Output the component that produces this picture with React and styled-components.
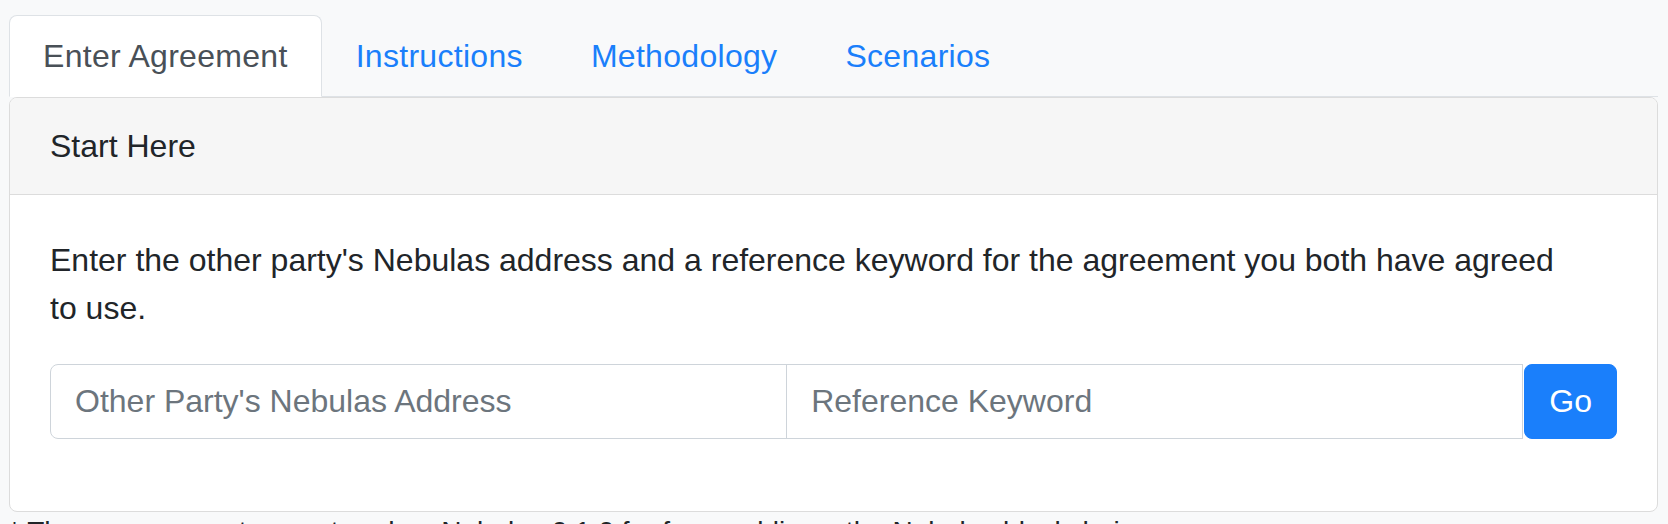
import React from 'react'
import styled, { createGlobalStyle } from 'styled-components'

const GlobalStyle = createGlobalStyle`
  body {
    margin: 0;
    background: #f8f9fa;
    font-family: "Liberation Sans", Arial, Helvetica, sans-serif;
    color: #212529;
  }
`

const tabs = ['Enter Agreement', 'Instructions', 'Methodology', 'Scenarios']

export default function App() {
  return (
    <>
      <GlobalStyle />
      <Page>
        <TabBar>
          {tabs.map((t, i) => (
            <Tab key={t} $active={i === 0}>{t}</Tab>
          ))}
        </TabBar>
        <Card>
          <CardHeader>Start Here</CardHeader>
          <CardBody>
            <Lead>
              Enter the other party's Nebulas address and a reference keyword for the agreement you both have agreed to use.
            </Lead>
            <InputGroup>
              <Field $first placeholder="Other Party's Nebulas Address" />
              <Field placeholder="Reference Keyword" />
              <GoButton>Go</GoButton>
            </InputGroup>
          </CardBody>
        </Card>
        <Footnote>* These agreements are stored on Nebulas 0.1.0 for free, public on the Nebulas blockchain.</Footnote>
      </Page>
    </>
  )
}

const Page = styled.div`
  padding: 15px 10px 0 9px;
  overflow: hidden;
`

const TabBar = styled.div`
  display: flex;
  border-bottom: 1px solid #dee2e6;
`

const Tab = styled.a`
  display: block;
  padding: 16px 33px;
  margin-bottom: -1px;
  font-size: 32px;
  line-height: 48px;
  letter-spacing: 0.3px;
  cursor: pointer;
  border: 1px solid transparent;
  border-radius: 8px 8px 0 0;
  color: ${p => (p.$active ? '#495057' : '#1a7ffb')};
  background: ${p => (p.$active ? '#fff' : 'transparent')};
  border-color: ${p => (p.$active ? '#dee2e6 #dee2e6 #fff' : 'transparent')};
`

const Card = styled.div`
  background: #fff;
  border: 1px solid #dcdcdc;
  border-radius: 8px;
  overflow: hidden;
`

const CardHeader = styled.div`
  padding: 24px 40px;
  font-size: 32px;
  line-height: 48px;
  background: #f6f6f6;
  border-bottom: 1px solid #dcdcdc;
`

const CardBody = styled.div`
  padding: 41px 40px 40px;
`

const Lead = styled.p`
  margin: 0 0 32px;
  font-size: 32px;
  line-height: 48px;
  max-width: 1515px;
`

const InputGroup = styled.div`
  display: flex;
  margin-bottom: 32px;
`

const Field = styled.input`
  flex: 1 1 0;
  min-width: 0;
  height: 75px;
  box-sizing: border-box;
  padding: 12px 24px;
  font-family: "Liberation Sans", Arial, sans-serif;
  font-size: 32px;
  color: #495057;
  border: 1px solid #ced4da;
  margin-left: ${p => (p.$first ? '0' : '-1px')};
  border-radius: ${p => (p.$first ? '8px 0 0 8px' : '0')};
  outline: none;
  &::placeholder {
    color: #6c757d;
  }
`

const GoButton = styled.button`
  height: 75px;
  padding: 12px 24px;
  margin-left: 1px;
  font-family: "Liberation Sans", Arial, sans-serif;
  font-size: 32px;
  color: #fff;
  background: #1a7ffb;
  border: 1px solid #1a7ffb;
  border-radius: 8px;
  cursor: pointer;
`

const Footnote = styled.p`
  margin: 0;
  padding-top: 4px;
  font-size: 28px;
  line-height: 32px;
  color: #212529;
`
